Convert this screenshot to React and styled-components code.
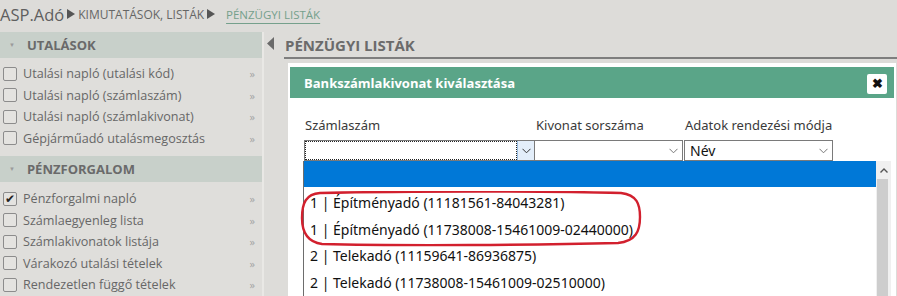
import React from "react";
import styled, { createGlobalStyle } from "styled-components";

const GlobalStyle = createGlobalStyle`
  html, body {
    margin: 0;
    padding: 0;
    background: #dddcd9;
    overflow: hidden;
  }
  * { box-sizing: border-box; }
`;

const Page = styled.div`
  width: 897px;
  height: 296px;
  display: flex;
  flex-direction: column;
  font-family: "Open Sans", "Noto Sans", sans-serif;
  background: #dddcd9;
  overflow: hidden;
`;

const TopBar = styled.div`
  height: 32px;
  flex-shrink: 0;
  display: flex;
  align-items: center;
  padding-bottom: 4px;
  color: #5f5f5f;
`;

const Brand = styled.span`
  font-size: 16.5px;
`;

const Crumb = styled.span`
  font-size: ${(p) => (p.$active ? "11.5px" : "12px")};
  text-transform: uppercase;
  color: ${(p) => (p.$active ? "#75a08c" : "#666")};
  text-decoration: ${(p) => (p.$active ? "underline" : "none")};
  text-underline-offset: 4px;
`;

const Sep = styled.svg`
  width: 8px;
  height: 10px;
  margin: 0 ${(p) => p.$after}px 0 ${(p) => p.$before}px;
`;

const Body = styled.div`
  flex: 1;
  display: flex;
  min-height: 0;
`;

const Sidebar = styled.div`
  width: 264px;
  flex-shrink: 0;
  background: #dfdedb;
  border-right: 2px solid #e9e8e5;
`;

const SectionHead = styled.div`
  height: 26px;
  background: #c8d0ca;
  display: flex;
  align-items: center;
  padding-left: 9px;
  font-size: 13px;
  font-weight: 700;
  color: #6a6a6a;
  &::before {
    content: "▼";
    font-size: 6px;
    color: #9a9a9a;
    margin-right: 12px;
  }
`;

const ItemList = styled.div`
  padding: ${(p) => p.$pad};
`;

const Item = styled.div`
  height: 21.5px;
  display: flex;
  align-items: center;
  padding-left: 3px;
  padding-right: 7px;
  font-size: 12.6px;
  color: #676767;
`;

const Check = styled.span`
  width: 14px;
  height: 14px;
  border: 1px solid #8c8c8c;
  border-radius: 2px;
  background: #e4e3e0;
  margin-right: 6px;
  flex-shrink: 0;
  display: flex;
  align-items: center;
  justify-content: center;
  font-size: 12px;
  color: #222;
  line-height: 1;
`;

const ItemLabel = styled.span`
  flex: 1;
`;

const More = styled.span`
  font-size: 11px;
  color: #a3a3a3;
`;

const Main = styled.div`
  flex: 1;
  display: flex;
  flex-direction: column;
  min-width: 0;
`;

const TitleRow = styled.div`
  height: 27px;
  display: flex;
  align-items: center;
  margin-left: 2px;
`;

const TitleArrow = styled.svg`
  width: 7px;
  height: 13px;
  margin: -5px 10px 0 1px;
`;

const Title = styled.h1`
  margin: 0;
  flex: 1;
  font-size: 15px;
  font-weight: 700;
  color: #6b6b6b;
  height: 27px;
  line-height: 27px;
  border-bottom: 2px solid #7e7e7e;
  padding-left: 1px;
`;

const Modal = styled.div`
  margin: 4px 1px 0 24px;
  flex: 1;
  background: #fff;
  padding: 4px 2px 0 2px;
  position: relative;
`;

const ModalHead = styled.div`
  height: 31px;
  background: #5aa588;
  display: flex;
  align-items: center;
  justify-content: space-between;
  padding: 0 7px 0 14px;
  color: #fff;
  font-size: 13px;
  font-weight: 700;
`;

const CloseBtn = styled.button`
  width: 20px;
  height: 20px;
  border: none;
  border-radius: 2px;
  background: #fff;
  padding: 0;
  font-size: 13px;
  font-weight: 900;
  color: #111;
  display: flex;
  align-items: center;
  justify-content: center;
  margin-top: 2px;
`;

const ModalBody = styled.div`
  padding: 19px 0 0 14px;
  display: grid;
  grid-template-columns: 231px 149px 149px;
  font-family: "Noto Sans", "Open Sans", sans-serif;
`;

const Field = styled.div`
  position: relative;
  display: flex;
  flex-direction: column;
`;

const Label = styled.label`
  font-size: 13px;
  color: #3a3a3a;
  height: 17px;
  line-height: 17px;
  margin-bottom: 6px;
  padding-left: 1px;
`;

const Select = styled.div`
  height: 21px;
  border: 1px solid #7a7a7a;
  border-left: ${(p) => (p.$joined ? "none" : "1px solid #7a7a7a")};
  background: #fff;
  display: flex;
  align-items: stretch;
  font-size: 14px;
  color: #111;
  width: ${(p) => p.$w}px;
`;

const SelectValue = styled.div`
  flex: 1;
  padding-left: 5px;
  line-height: 19px;
  outline: ${(p) => (p.$focus ? "1px dotted #222" : "none")};
  outline-offset: -1px;
`;

const Arrow = styled.div`
  width: 17px;
  display: flex;
  align-items: center;
  justify-content: center;
  background: ${(p) => (p.$focus ? "#e3eefa" : "#fff")};
  border-left: ${(p) => (p.$focus ? "1px solid #9bbfe3" : "none")};
  svg {
    width: 9px;
    height: 6px;
  }
`;

const Dropdown = styled.div`
  position: absolute;
  left: -1px;
  top: 44px;
  width: 588px;
  height: 140px;
  background: #fff;
  border-left: 1px solid #6d6d6d;
  display: flex;
  z-index: 2;
`;

const Options = styled.div`
  flex: 1;
  font-family: "Noto Sans", sans-serif;
  font-size: 14px;
  color: #111;
`;

const BlankOption = styled.div`
  height: 26px;
  margin-bottom: 3px;
  background: #0078d7;
`;

const Option = styled.div`
  height: 26.5px;
  line-height: 26.5px;
  padding-left: 6px;
  white-space: nowrap;
`;

const Scrollbar = styled.div`
  width: 15px;
  background: #f0f0f0;
  display: flex;
  flex-direction: column;
`;

const ScrollBtn = styled.div`
  height: 18px;
  display: flex;
  align-items: center;
  justify-content: center;
  svg {
    width: 8px;
    height: 5px;
  }
`;

const Thumb = styled.div`
  flex: 1;
  margin: 0 3px 0 1px;
  background: #cdcdcd;
`;

const Highlight = styled.svg`
  position: absolute;
  left: -4px;
  top: 30px;
  width: 342px;
  height: 56px;
  pointer-events: none;
`;

const Chevron = ({ color = "#444" }) => (
  <svg viewBox="0 0 9 6">
    <path d="M0.5 0.8 L4.5 4.8 L8.5 0.8" fill="none" stroke={color} strokeWidth="1" />
  </svg>
);

const Triangle = ({ before, after }) => (
  <Sep viewBox="0 0 8 10" $before={before} $after={after}>
    <path d="M0 0 L8 5 L0 10 Z" fill="#555" />
  </Sep>
);

const utalasok = [
  "Utalási napló (utalási kód)",
  "Utalási napló (számlaszám)",
  "Utalási napló (számlakivonat)",
  "Gépjárműadó utalásmegosztás",
];

const penzforgalom = [
  { label: "Pénzforgalmi napló", checked: true },
  { label: "Számlaegyenleg lista" },
  { label: "Számlakivonatok listája" },
  { label: "Várakozó utalási tételek" },
  { label: "Rendezetlen függő tételek" },
];

const options = [
  "1 | Építményadó (11181561-84043281)",
  "1 | Építményadó (11738008-15461009-02440000)",
  "2 | Telekadó (11159641-86936875)",
  "2 | Telekadó (11738008-15461009-02510000)",
];

export default function App() {
  return (
    <Page>
      <GlobalStyle />
      <TopBar>
        <Brand>ASP.Adó</Brand>
        <Triangle before={3} after={3} />
        <Crumb>Kimutatások, listák</Crumb>
        <Triangle before={3} after={11} />
        <Crumb $active>Pénzügyi listák</Crumb>
      </TopBar>
      <Body>
        <Sidebar>
          <SectionHead>UTALÁSOK</SectionHead>
          <ItemList $pad="5px 0 7px">
            {utalasok.map((t) => (
              <Item key={t}>
                <Check />
                <ItemLabel>{t}</ItemLabel>
                <More>»</More>
              </Item>
            ))}
          </ItemList>
          <SectionHead>PÉNZFORGALOM</SectionHead>
          <ItemList $pad="6px 0 0">
            {penzforgalom.map((it) => (
              <Item key={it.label}>
                <Check>{it.checked ? "✔" : ""}</Check>
                <ItemLabel>{it.label}</ItemLabel>
                <More>»</More>
              </Item>
            ))}
          </ItemList>
        </Sidebar>
        <Main>
          <TitleRow>
            <TitleArrow viewBox="0 0 7 13">
              <path d="M7 0 L0 6.5 L7 13 Z" fill="#6a6a6a" />
            </TitleArrow>
            <Title>PÉNZÜGYI LISTÁK</Title>
          </TitleRow>
          <Modal>
            <ModalHead>
              Bankszámlakivonat kiválasztása
              <CloseBtn>✖</CloseBtn>
            </ModalHead>
            <ModalBody>
              <Field>
                <Label>Számlaszám</Label>
                <Select $w={231}>
                  <SelectValue $focus />
                  <Arrow $focus>
                    <Chevron color="#333" />
                  </Arrow>
                </Select>
                <Dropdown>
                  <Options>
                    <BlankOption />
                    {options.map((o) => (
                      <Option key={o}>{o}</Option>
                    ))}
                  </Options>
                  <Scrollbar>
                    <ScrollBtn>
                      <svg viewBox="0 0 8 5">
                        <path d="M0.5 4.5 L4 1 L7.5 4.5" fill="none" stroke="#555" strokeWidth="1.4" />
                      </svg>
                    </ScrollBtn>
                    <Thumb />
                  </Scrollbar>
                  <Highlight viewBox="0 0 342 56">
                    <path
                      d="M20 2 C110 0 250 0 321 2 C337 4 340 13 340 26 C340 40 336 50 318 52 C240 54 100 55 22 53 C7 51 2 41 2 27 C2 12 6 3 20 2 Z"
                      fill="none"
                      stroke="#d2202e"
                      strokeWidth="2.4"
                    />
                  </Highlight>
                </Dropdown>
              </Field>
              <Field>
                <Label>Kivonat sorszáma</Label>
                <Select $w={148} $joined>
                  <SelectValue />
                  <Arrow>
                    <Chevron color="#777" />
                  </Arrow>
                </Select>
              </Field>
              <Field>
                <Label>Adatok rendezési módja</Label>
                <Select $w={149}>
                  <SelectValue>Név</SelectValue>
                  <Arrow>
                    <Chevron color="#777" />
                  </Arrow>
                </Select>
              </Field>
            </ModalBody>
          </Modal>
        </Main>
      </Body>
    </Page>
  );
}
